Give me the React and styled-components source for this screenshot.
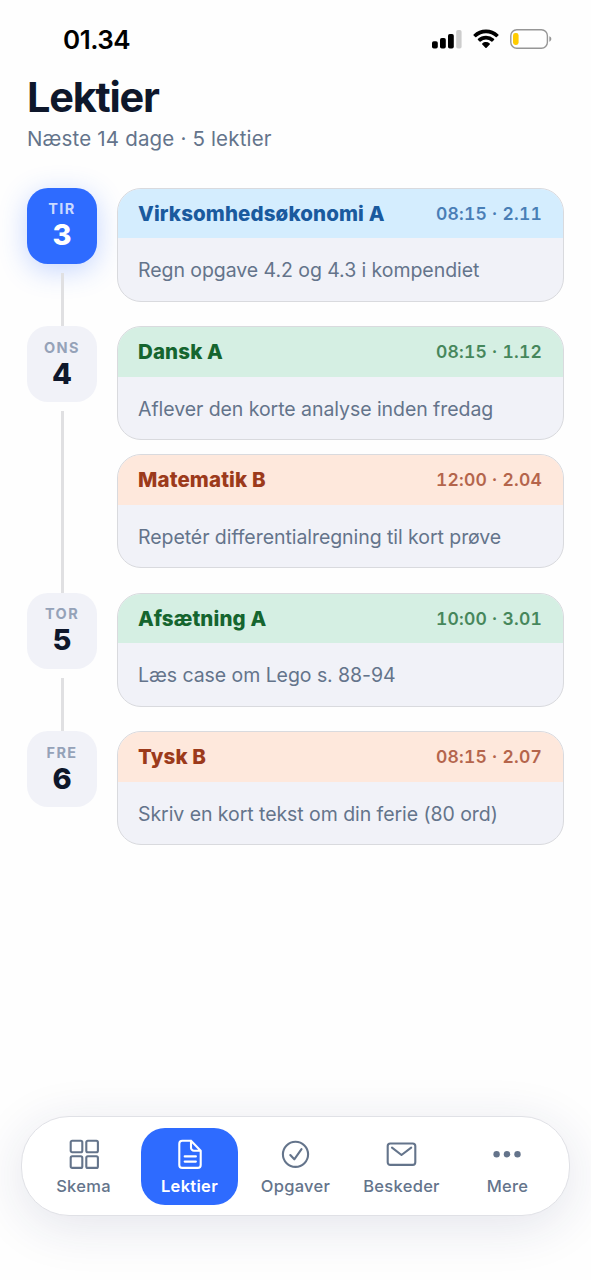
import styled, { createGlobalStyle } from "styled-components";

const GlobalStyle = createGlobalStyle`
  * {
    box-sizing: border-box;
  }
  body {
    margin: 0;
    background-color: #fefefe;
    font-family: Inter, "Liberation Sans", sans-serif;
    -webkit-font-smoothing: antialiased;
  }
`;

const subjectColors = {
  blue: { background: "#d4edfe", color: "#1a5a9e" },
  green: { background: "#d5efe3", color: "#15652f" },
  orange: { background: "#fee8dc", color: "#9c3a1b" },
};

const days = [
  {
    weekday: "TIR",
    date: 3,
    today: true,
    lessons: [
      {
        subject: "Virksomhedsøkonomi A",
        time: "08:15 · 2.11",
        text: "Regn opgave 4.2 og 4.3 i kompendiet",
        color: "blue",
      },
    ],
  },
  {
    weekday: "ONS",
    date: 4,
    lessons: [
      {
        subject: "Dansk A",
        time: "08:15 · 1.12",
        text: "Aflever den korte analyse inden fredag",
        color: "green",
      },
      {
        subject: "Matematik B",
        time: "12:00 · 2.04",
        text: "Repetér differentialregning til kort prøve",
        color: "orange",
      },
    ],
  },
  {
    weekday: "TOR",
    date: 5,
    lessons: [
      {
        subject: "Afsætning A",
        time: "10:00 · 3.01",
        text: "Læs case om Lego s. 88-94",
        color: "green",
      },
    ],
  },
  {
    weekday: "FRE",
    date: 6,
    lessons: [
      {
        subject: "Tysk B",
        time: "08:15 · 2.07",
        text: "Skriv en kort tekst om din ferie (80 ord)",
        color: "orange",
      },
    ],
  },
];

const Screen = styled.div`
  display: flex;
  flex-direction: column;
  width: 591px;
  height: 1280px;
  overflow: hidden;
`;

const StatusBar = styled.div`
  display: flex;
  justify-content: space-between;
  align-items: center;
  height: 78px;
  padding: 0 39px 0 63px;
`;

const Clock = styled.div`
  padding-top: 2px;
  font-size: 26px;
  font-weight: 600;
  letter-spacing: -0.5px;
  line-height: 32px;
  color: #000;
`;

const StatusIcons = styled.div`
  display: flex;
  align-items: center;
  gap: 11px;
  svg {
    display: block;
  }
`;

const Header = styled.header`
  padding: 0 27px;
`;

const Title = styled.h1`
  margin: 0;
  font-size: 41.5px;
  font-weight: 700;
  line-height: 38px;
  letter-spacing: -1.25px;
  color: #0e172b;
`;

const Subtitle = styled.div`
  margin-top: 10px;
  font-size: 20.5px;
  line-height: 26px;
  letter-spacing: 0.17px;
  color: #64748b;
`;

const Timeline = styled.main`
  display: flex;
  flex-direction: column;
  gap: 24.5px;
  padding: 35.5px 27px 0;
  flex: 1;
`;

const DayRow = styled.section`
  display: flex;
  gap: 20px;
`;

const DayRail = styled.div`
  display: flex;
  flex-direction: column;
  align-items: center;
  width: 70px;
`;

const DayBadge = styled.div`
  display: flex;
  flex-direction: column;
  align-items: center;
  flex: none;
  width: 70px;
  height: 76px;
  padding-top: 12.5px;
  border-radius: 21px;
  background-color: ${(props) => (props.$today ? "#2e6bff" : "#f1f2f8")};
  box-shadow: ${(props) =>
    props.$today ? "0 6px 28px rgba(46, 107, 255, 0.28)" : "none"};
`;

const Weekday = styled.div`
  font-size: 14.5px;
  font-weight: 700;
  line-height: 18px;
  letter-spacing: 1.4px;
  color: ${(props) => (props.$today ? "#cbdaff" : "#95a2b8")};
`;

const DateNumber = styled.div`
  font-size: 29px;
  font-weight: 800;
  line-height: 33px;
  color: ${(props) => (props.$today ? "#fff" : "#0e172b")};
`;

const Connector = styled.div`
  flex: 1;
  width: 3px;
  margin-top: 9px;
  margin-bottom: -24.5px;
  background-color: #e0e0e2;
`;

const Lessons = styled.div`
  display: flex;
  flex-direction: column;
  gap: 14px;
  flex: 1;
`;

const LessonCard = styled.article`
  height: 114px;
  border: 1px solid #d9dade;
  border-radius: 24px;
  background-color: #f1f2f8;
  overflow: hidden;
`;

const LessonHeader = styled.div`
  display: flex;
  justify-content: space-between;
  align-items: center;
  height: 49.5px;
  padding: 1px 21px 0 20px;
  background-color: ${(props) => subjectColors[props.$color].background};
  color: ${(props) => subjectColors[props.$color].color};
`;

const Subject = styled.div`
  font-size: 20.5px;
  font-weight: 800;
  line-height: 26px;
  letter-spacing: 0.12px;
`;

const Time = styled.div`
  font-size: 17.5px;
  font-weight: 600;
  font-variant-numeric: tabular-nums;
  line-height: 22px;
  letter-spacing: 0.2px;
  opacity: 0.75;
`;

const LessonText = styled.div`
  padding: 18px 20px 0;
  font-size: 19.5px;
  line-height: 28px;
  letter-spacing: -0.06px;
  color: #64748b;
  white-space: nowrap;
`;

const TabBar = styled.nav`
  display: grid;
  grid-template-columns: repeat(5, 1fr);
  gap: 9px;
  height: 100px;
  margin: 0 21px 64px;
  padding: 11px 13px 10px;
  border: 1px solid #e0e1e6;
  border-radius: 48px;
  background-color: #fff;
  box-shadow: 0 10px 52px rgba(30, 41, 100, 0.12);
`;

const Tab = styled.div`
  display: flex;
  flex-direction: column;
  align-items: center;
  height: 77px;
  padding-top: 10px;
  border-radius: 24px;
  font-size: 16.5px;
  font-weight: ${(props) => (props.$active ? 600 : 500)};
  line-height: 22px;
  letter-spacing: 0.3px;
  color: ${(props) => (props.$active ? "#fff" : "#64748b")};
  background-color: ${(props) => (props.$active ? "#2e6bff" : "transparent")};
  svg {
    display: block;
    margin-bottom: 5px;
    overflow: visible;
  }
`;

function TabIcon({ children }) {
  return (
    <svg
      width="32"
      height="32"
      viewBox="0 0 32 32"
      fill="none"
      stroke="currentColor"
      strokeWidth="2.1"
      strokeLinecap="round"
      strokeLinejoin="round"
    >
      {children}
    </svg>
  );
}

const tabs = [
  {
    label: "Skema",
    icon: (
      <>
        <rect x="2.7" y="2.7" width="11.6" height="11.6" rx="1.5" />
        <rect x="18.3" y="2.7" width="11.6" height="11.6" rx="1.5" />
        <rect x="2.7" y="18.3" width="11.6" height="11.6" rx="1.5" />
        <rect x="18.3" y="18.3" width="11.6" height="11.6" rx="1.5" />
      </>
    ),
  },
  {
    label: "Lektier",
    active: true,
    icon: (
      <>
        <path d="M17 2.7H8.300a3 3 0 0 0-3 3v21.200a3 3 0 0 0 3 3h15.400a3 3 0 0 0 3-3V12.700L17 2.700v7a3 3 0 0 0 3 3h6.700" />
        <path d="M10.700 18.400h11.200M10.700 23.600h11.200" />
      </>
    ),
  },
  {
    label: "Opgaver",
    icon: (
      <>
        <circle cx="15.5" cy="16.3" r="12.6" />
        <path d="M10.3 17l4 4.300 7.200-10.200" />
      </>
    ),
  },
  {
    label: "Beskeder",
    icon: (
      <>
        <rect x="1.7" y="5.5" width="27.6" height="21.4" rx="2.6" />
        <path d="M6 9.7l9.500 7.300 9.700-7.300" />
      </>
    ),
  },
  {
    label: "Mere",
    icon: (
      <g fill="currentColor" stroke="none">
        <circle cx="4.6" cy="16.2" r="3.2" />
        <circle cx="15" cy="16.2" r="3.2" />
        <circle cx="25.5" cy="16.2" r="3.2" />
      </g>
    ),
  },
];

function SignalIcon() {
  return (
    <svg width="30" height="20" viewBox="0 0 30 20">
      <rect x="0" y="12.3" width="5.8" height="7.2" rx="1.8" />
      <rect x="8" y="9" width="5.8" height="10.5" rx="1.8" />
      <rect x="16" y="5" width="5.8" height="14.5" rx="1.8" />
      <rect x="24.2" y="1" width="5.4" height="18.5" rx="1.8" fill="#cdcdcd" />
    </svg>
  );
}

function WifiIcon() {
  return (
    <svg width="26" height="20" viewBox="0 0 26 20">
      <path d="M13 0.5C8.2 0.5 3.9 2.4 0.6 5.4a.8.8 0 0 0 0 1.1l1.6 1.6a.8.8 0 0 0 1.1 0A14.2 14.2 0 0 1 13 4.3c3.7 0 7.1 1.4 9.7 3.8a.8.8 0 0 0 1.1 0l1.6-1.6a.8.8 0 0 0 0-1.1A18.2 18.2 0 0 0 13 .5z" />
      <path d="M13 6.7c-3.1 0-5.9 1.2-8 3.1a.8.8 0 0 0 0 1.2l1.6 1.6a.8.8 0 0 0 1.1 0A7.9 7.9 0 0 1 13 10.5c2 0 3.9.8 5.3 2.1a.8.8 0 0 0 1.1 0L21 11a.8.8 0 0 0 0-1.2A11.9 11.9 0 0 0 13 6.7z" />
      <path d="M13 13c-1.4 0-2.7.5-3.7 1.4a.7.7 0 0 0 0 1.1l3.1 3.2a.8.8 0 0 0 1.2 0l3.1-3.2a.7.7 0 0 0 0-1.1A5.6 5.6 0 0 0 13 13z" />
    </svg>
  );
}

function BatteryIcon() {
  return (
    <svg width="42" height="20" viewBox="0 0 42 20">
      <rect
        x="0.8"
        y="0.8"
        width="36.6"
        height="18.4"
        rx="6"
        fill="none"
        stroke="#969696"
        strokeWidth="1.4"
      />
      <rect x="3" y="4" width="5.6" height="12" rx="2.4" fill="#fc0" />
      <path d="M39.3 7.3c1.3.5 2 1.5 2 2.7s-.7 2.2-2 2.7z" fill="#969696" />
    </svg>
  );
}

function Lesson({ subject, time, text, color }) {
  return (
    <LessonCard>
      <LessonHeader $color={color}>
        <Subject>{subject}</Subject>
        <Time>{time}</Time>
      </LessonHeader>
      <LessonText>{text}</LessonText>
    </LessonCard>
  );
}

function App() {
  return (
    <Screen>
      <GlobalStyle />
      <StatusBar>
        <Clock>01.34</Clock>
        <StatusIcons>
          <SignalIcon />
          <WifiIcon />
          <BatteryIcon />
        </StatusIcons>
      </StatusBar>
      <Header>
        <Title>Lektier</Title>
        <Subtitle>Næste 14 dage · 5 lektier</Subtitle>
      </Header>
      <Timeline>
        {days.map((day, index) => (
          <DayRow key={day.date}>
            <DayRail>
              <DayBadge $today={day.today}>
                <Weekday $today={day.today}>{day.weekday}</Weekday>
                <DateNumber $today={day.today}>{day.date}</DateNumber>
              </DayBadge>
              {index < days.length - 1 && <Connector />}
            </DayRail>
            <Lessons>
              {day.lessons.map((lesson) => (
                <Lesson key={lesson.subject} {...lesson} />
              ))}
            </Lessons>
          </DayRow>
        ))}
      </Timeline>
      <TabBar>
        {tabs.map((tab) => (
          <Tab key={tab.label} $active={tab.active}>
            <TabIcon>{tab.icon}</TabIcon>
            {tab.label}
          </Tab>
        ))}
      </TabBar>
    </Screen>
  );
}

export default App;
